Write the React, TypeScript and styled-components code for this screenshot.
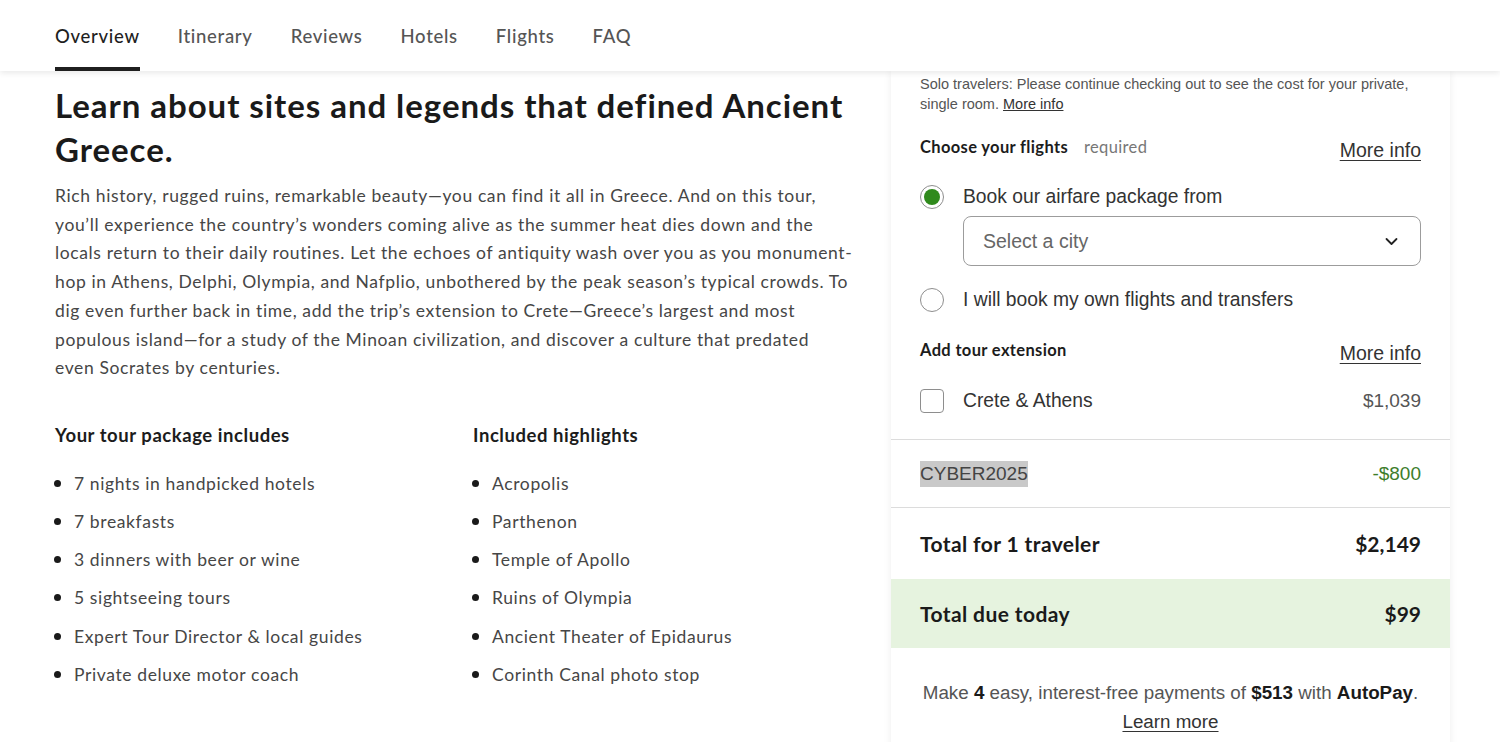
import React from "react";
import styled, { createGlobalStyle } from "styled-components";

const Global = createGlobalStyle`
  html, body { margin: 0; padding: 0; background: #fff; }
  body { font-family: Lato, "Liberation Sans", sans-serif; color: #222; overflow: hidden; }
  * { box-sizing: border-box; }
`;

const Page = styled.div`
  width: 1500px;
  height: 742px;
  position: relative;
  overflow: hidden;
`;

const Nav = styled.nav`
  height: 71px;
  display: flex;
  align-items: stretch;
  gap: 38px;
  padding-left: 55px;
  background: #fff;
  box-shadow: 0 2px 6px rgba(0, 0, 0, 0.09);
  position: relative;
  z-index: 2;
`;

const NavItem = styled.a<{ $active?: boolean }>`
  display: flex;
  align-items: center;
  font-family: Lato, sans-serif;
  font-size: 18.5px;
  font-weight: 500;
  color: ${(p) => (p.$active ? "#1f1f1f" : "#555")};
  border-bottom: 4px solid ${(p) => (p.$active ? "#1f1f1f" : "transparent")};
  padding-top: 4px;
  letter-spacing: 0.7px;
`;

const Main = styled.main`
  display: flex;
  align-items: flex-start;
  padding-left: 55px;
`;

const Left = styled.section`
  width: 810px;
  padding-top: 12px;
`;

const Title = styled.h1`
  margin: 0;
  font-family: Lato, sans-serif;
  font-size: 33px;
  line-height: 44px;
  font-weight: 700;
  color: #1a1a1a;
  letter-spacing: 0.95px;
`;

const Para = styled.p`
  margin: 11px 0 0;
  font-size: 17.5px;
  line-height: 28.7px;
  color: #464646;
  letter-spacing: 0.62px;
`;

const Line = styled.span`
  display: block;
  white-space: nowrap;
`;

const Cols = styled.div`
  display: grid;
  grid-template-columns: 418px 390px;
  margin-top: 40px;
`;

const ColTitle = styled.h3`
  margin: 0;
  font-size: 18.5px;
  line-height: 24px;
  font-weight: 700;
  color: #1c1c1c;
  letter-spacing: 0.55px;
`;

const List = styled.ul`
  margin: 21px 0 0;
  padding-left: 19px;
  display: flex;
  flex-direction: column;
  gap: 10.2px;
`;

const Item = styled.li`
  font-size: 17.5px;
  line-height: 28px;
  height: 28px;
  color: #464646;
  letter-spacing: 0.62px;
  &::marker { color: #1a1a1a; font-size: 20px; }
`;

const Panel = styled.aside`
  margin-left: 26px;
  width: 559px;
  background: #fff;
  box-shadow: 0 0 8px rgba(0, 0, 0, 0.07);
  font-family: "Liberation Sans", Arial, sans-serif;
  min-height: 700px;
`;

const Inner = styled.div`
  padding: 3px 29px 0;
`;

const Note = styled.p`
  margin: 0;
  font-size: 14.5px;
  line-height: 20px;
  color: #555;
`;

const NoteLink = styled.a`
  color: #333;
  text-decoration: underline;
`;

const HeadRow = styled.div<{ $mt: number }>`
  display: flex;
  align-items: center;
  justify-content: space-between;
  margin-top: ${(p) => p.$mt}px;
  height: 26px;
`;

const Label = styled.div`
  font-family: Lato, sans-serif;
  font-weight: 700;
  font-size: 16.5px;
  letter-spacing: 0.35px;
  color: #1c1c1c;
  span {
    font-weight: 400;
    color: #777;
    margin-left: 16px;
  }
`;

const MoreInfo = styled.a`
  font-size: 19.5px;
  color: #333;
  text-decoration: underline;
  text-underline-offset: 3px;
  padding-top: 6px;
`;

const OptRow = styled.div<{ $mt: number }>`
  display: flex;
  align-items: center;
  gap: 19px;
  margin-top: ${(p) => p.$mt}px;
  height: 28px;
  font-size: 19.3px;
  color: #333;
`;

const Radio = styled.span<{ $on?: boolean }>`
  width: 24px;
  height: 24px;
  border-radius: 50%;
  border: 1px solid #8e8e8e;
  display: flex;
  align-items: center;
  justify-content: center;
  flex: none;
  &::after {
    content: "";
    width: 16px;
    height: 16px;
    border-radius: 50%;
    background: ${(p) => (p.$on ? "#2f8a1c" : "transparent")};
  }
`;

const Check = styled.span`
  width: 24px;
  height: 24px;
  border-radius: 4px;
  border: 1px solid #8e8e8e;
  flex: none;
`;

const Select = styled.div`
  margin: 5px 0 0 43px;
  height: 50px;
  border: 1px solid #9c9c9c;
  border-radius: 8px;
  display: flex;
  align-items: center;
  justify-content: space-between;
  padding: 0 22px 0 19px;
  font-size: 19.5px;
  color: #666;
`;

const Price = styled.span<{ $color?: string }>`
  margin-left: auto;
  color: ${(p) => p.$color || "#555"};
  font-size: 19px;
`;

const Divider = styled.div`
  height: 1px;
  background: #dcdcdc;
`;

const Spacer = styled.div`
  height: 24px;
`;

const PromoRow = styled.div`
  height: 67px;
  display: flex;
  align-items: center;
  padding: 0 29px;
  font-size: 19px;
  color: #444;
`;

const Code = styled.span`
  background: #c9c9c9;
  padding: 2px 0;
`;

const TotalRow = styled.div<{ $bg?: string; $h: number }>`
  height: ${(p) => p.$h}px;
  display: flex;
  align-items: center;
  justify-content: space-between;
  padding: 0 29px;
  background: ${(p) => p.$bg || "transparent"};
  font-family: Lato, sans-serif;
  font-weight: 700;
  color: #1a1a1a;
`;

const TotalLabel = styled.span`
  font-size: 21px;
  letter-spacing: 0.4px;
`;

const TotalValue = styled.span`
  font-size: 21px;
`;

const AutoPay = styled.div`
  padding-top: 30px;
  text-align: center;
  font-size: 18.8px;
  line-height: 29px;
  color: #555;
  b { color: #1a1a1a; font-weight: 700; }
  a { color: #333; text-decoration: underline; text-underline-offset: 3px; }
`;

const Chevron = () => (
  <svg width="13" height="9" viewBox="0 0 13 9" fill="none">
    <path d="M1.5 2 L6.5 7 L11.5 2" stroke="#222" strokeWidth="1.8" strokeLinecap="round" strokeLinejoin="round" />
  </svg>
);

const included = [
  "7 nights in handpicked hotels",
  "7 breakfasts",
  "3 dinners with beer or wine",
  "5 sightseeing tours",
  "Expert Tour Director & local guides",
  "Private deluxe motor coach",
];

const highlights = [
  "Acropolis",
  "Parthenon",
  "Temple of Apollo",
  "Ruins of Olympia",
  "Ancient Theater of Epidaurus",
  "Corinth Canal photo stop",
];

const paraLines = [
  "Rich history, rugged ruins, remarkable beauty—you can find it all in Greece. And on this tour,",
  "you’ll experience the country’s wonders coming alive as the summer heat dies down and the",
  "locals return to their daily routines. Let the echoes of antiquity wash over you as you monument-",
  "hop in Athens, Delphi, Olympia, and Nafplio, unbothered by the peak season’s typical crowds. To",
  "dig even further back in time, add the trip’s extension to Crete—Greece’s largest and most",
  "populous island—for a study of the Minoan civilization, and discover a culture that predated",
  "even Socrates by centuries.",
];

const navItems = ["Overview", "Itinerary", "Reviews", "Hotels", "Flights", "FAQ"];

export default function App() {
  return (
    <Page>
      <Global />
      <Nav>
        {navItems.map((n, i) => (
          <NavItem key={n} $active={i === 0}>
            {n}
          </NavItem>
        ))}
      </Nav>
      <Main>
        <Left>
          <Title>Learn about sites and legends that defined Ancient Greece.</Title>
          <Para>
            {paraLines.map((l) => (
              <Line key={l}>{l}</Line>
            ))}
          </Para>
          <Cols>
            <div>
              <ColTitle>Your tour package includes</ColTitle>
              <List>
                {included.map((t) => (
                  <Item key={t}>{t}</Item>
                ))}
              </List>
            </div>
            <div>
              <ColTitle>Included highlights</ColTitle>
              <List>
                {highlights.map((t) => (
                  <Item key={t}>{t}</Item>
                ))}
              </List>
            </div>
          </Cols>
        </Left>
        <Panel>
          <Inner>
            <Note>
              Solo travelers: Please continue checking out to see the cost for your private,
              <br />
              single room. <NoteLink>More info</NoteLink>
            </Note>
            <HeadRow $mt={20}>
              <Label>
                Choose your flights<span>required</span>
              </Label>
              <MoreInfo>More info</MoreInfo>
            </HeadRow>
            <OptRow $mt={23}>
              <Radio $on />
              Book our airfare package from
            </OptRow>
            <Select>
              Select a city
              <Chevron />
            </Select>
            <OptRow $mt={20}>
              <Radio />
              I will book my own flights and transfers
            </OptRow>
            <HeadRow $mt={23}>
              <Label>Add tour extension</Label>
              <MoreInfo>More info</MoreInfo>
            </HeadRow>
            <OptRow $mt={24}>
              <Check />
              Crete &amp; Athens
              <Price>$1,039</Price>
            </OptRow>
          </Inner>
          <Spacer />
          <Divider />
          <PromoRow>
            <Code>CYBER2025</Code>
            <Price $color="#3d7d2b">-$800</Price>
          </PromoRow>
          <Divider />
          <TotalRow $h={71}>
            <TotalLabel>Total for 1 traveler</TotalLabel>
            <TotalValue>$2,149</TotalValue>
          </TotalRow>
          <TotalRow $h={69} $bg="#e6f3df">
            <TotalLabel>Total due today</TotalLabel>
            <TotalValue>$99</TotalValue>
          </TotalRow>
          <AutoPay>
            Make <b>4</b> easy, interest-free payments of <b>$513</b> with <b>AutoPay</b>.
            <br />
            <a>Learn more</a>
          </AutoPay>
        </Panel>
      </Main>
    </Page>
  );
}
